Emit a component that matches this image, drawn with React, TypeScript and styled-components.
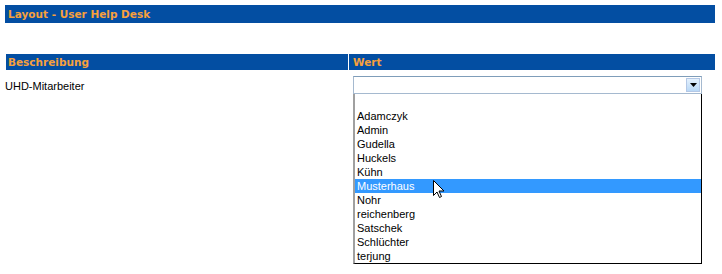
import styled, { createGlobalStyle } from 'styled-components'

const GlobalStyle = createGlobalStyle`
    body {
        margin: 0;
        background: #ffffff;
        font-family: "Liberation Sans", Arial, sans-serif;
        font-size: 11px;
        color: #000000;
    }
`

const Pagina = styled.div`
    box-sizing: border-box;
    min-height: 274px;
    padding: 5px 7px 0 5px;
`

const BarraTitulo = styled.div`
    height: 18px;
    background: #034ea2;
    color: #f7a03c;
    font-family: "DejaVu Sans", Verdana, sans-serif;
    font-weight: bold;
    font-size: 10.5px;
    line-height: 18px;
    padding-left: 3px;
`

const Tabela = styled.div`
    margin-top: 31px;
    display: grid;
    grid-template-columns: 342px 366px;
    column-gap: 1px;
    padding-left: 1px;
`

const CabecalhoCelula = styled.div<{ $recuo: number }>`
    height: 16px;
    background: #034ea2;
    color: #f7a03c;
    font-family: "DejaVu Sans", Verdana, sans-serif;
    font-weight: bold;
    font-size: 10.5px;
    line-height: 16px;
    padding-left: ${p => p.$recuo}px;
`

const Rotulo = styled.div`
    margin-left: -1px;
    padding-top: 10px;
`

const CelulaValor = styled.div`
    position: relative;
    padding: 6px 0 0 4px;
`

const CaixaSelecao = styled.div`
    width: 347px;
    height: 16px;
    border: 1px solid #a5b9cf;
    border-top-color: #7f9db9;
    display: flex;
    justify-content: flex-end;
    background: #ffffff;
`

const BotaoSeta = styled.div`
    width: 14px;
    height: 14px;
    margin: 1px;
    border: 1px solid #b4c8e6;
    box-sizing: border-box;
    background: linear-gradient(#e4f1fd, #b9d8f6);
    display: flex;
    align-items: center;
    justify-content: center;
`

const ListaSuspensa = styled.ul`
    position: absolute;
    z-index: 10;
    left: 4px;
    top: 24px;
    width: 346px;
    margin: 0;
    padding: 1px 0 0 0;
    list-style: none;
    background: #ffffff;
    border-left: 2px solid #a0a0a0;
    border-right: 1px solid #000000;
    border-bottom: 1px solid #000000;
`

const ItemLista = styled.li<{ $selecionado?: boolean }>`
    height: 14px;
    line-height: 14px;
    padding-left: 2px;
    background: ${p => (p.$selecionado ? '#3399ff' : 'transparent')};
    color: ${p => (p.$selecionado ? '#ffffff' : '#000000')};
    position: relative;
`

const Cursor = styled.svg`
    position: absolute;
    left: 78px;
    top: 1px;
`

const nomes = [
    '',
    'Adamczyk',
    'Admin',
    'Gudella',
    'Huckels',
    'Kühn',
    'Musterhaus',
    'Nohr',
    'reichenberg',
    'Satschek',
    'Schlüchter',
    'terjung',
]

function App() {
    return (
        <>
            <GlobalStyle />
            <Pagina>
                <BarraTitulo>Layout - User Help Desk</BarraTitulo>
                <Tabela>
                    <CabecalhoCelula $recuo={2}>Beschreibung</CabecalhoCelula>
                    <CabecalhoCelula $recuo={4}>Wert</CabecalhoCelula>
                    <Rotulo>UHD-Mitarbeiter</Rotulo>
                    <CelulaValor>
                        <CaixaSelecao>
                            <BotaoSeta>
                                <svg width="7" height="4" viewBox="0 0 7 4">
                                    <path d="M0 0H7L3.5 4Z" fill="#000" />
                                </svg>
                            </BotaoSeta>
                        </CaixaSelecao>
                        <ListaSuspensa>
                            {nomes.map(nome => (
                                <ItemLista key={nome || 'leer'} $selecionado={nome === 'Musterhaus'}>
                                    {nome || '\u00a0'}
                                    {nome === 'Musterhaus' && (
                                        <Cursor width="12" height="19" viewBox="0 0 12 19">
                                            <path
                                                d="M0.5 0.5V15.5L4 12L6.5 17.5L8.5 16.5L6 11H11Z"
                                                fill="#ffffff"
                                                stroke="#000000"
                                                strokeWidth="1"
                                            />
                                        </Cursor>
                                    )}
                                </ItemLista>
                            ))}
                        </ListaSuspensa>
                    </CelulaValor>
                </Tabela>
            </Pagina>
        </>
    )
}

export default App
